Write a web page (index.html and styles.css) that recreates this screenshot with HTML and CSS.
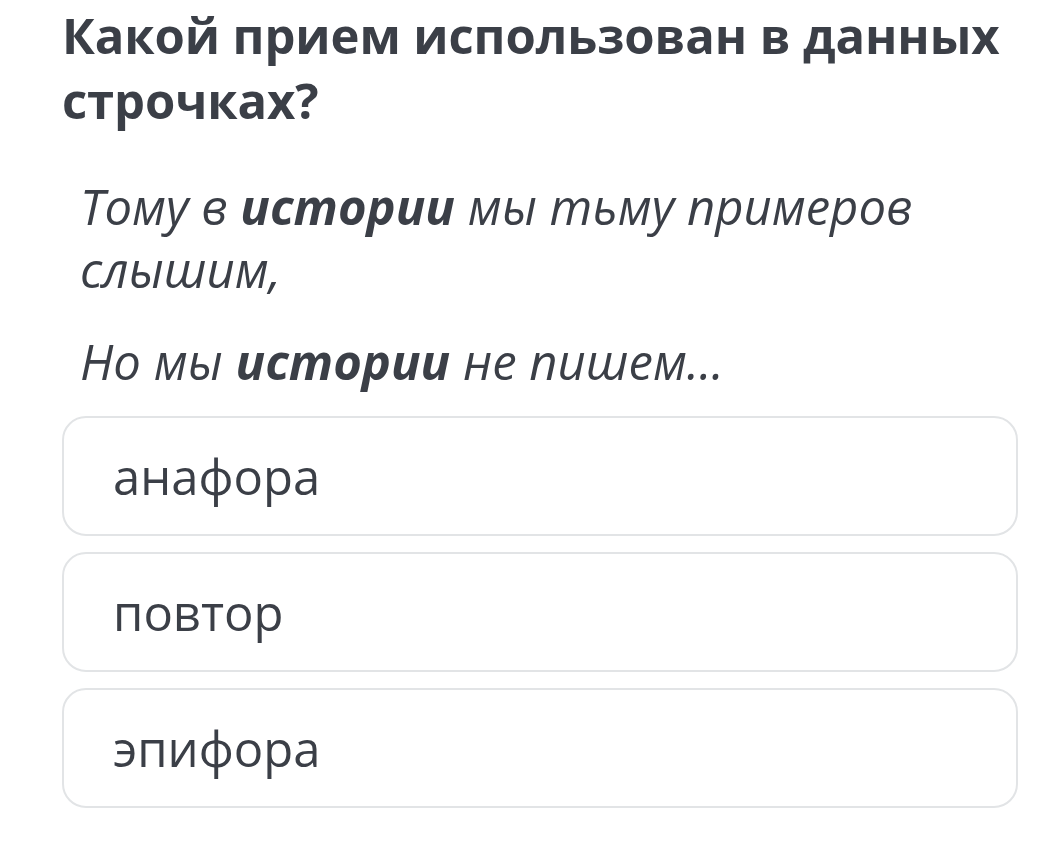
FILE: index.html
```html
<!DOCTYPE html>
<html lang="ru">
<head>
<meta charset="utf-8">
<link rel="stylesheet" href="styles.css">
</head>
<body>
<main class="quiz">
  <h1 class="question">Какой прием использован в данных строчках?</h1>
  <div class="quote">
    <p>Тому в <b>истории</b> мы тьму примеров слышим,</p>
    <p>Но мы <b>истории</b> не пишем...</p>
  </div>
  <div class="options">
    <div class="option">анафора</div>
    <div class="option">повтор</div>
    <div class="option">эпифора</div>
  </div>
</main>
</body>
</html>
```
FILE: styles.css
```css
html, body {
  margin: 0;
  padding: 0;
  background: #ffffff;
}
body {
  font-family: "Open Sans", "Liberation Sans", sans-serif;
  color: #3b3f47;
}
.quiz {
  width: 956px;
  padding: 0 34px 0 62px;
}
.question {
  margin: 0;
  padding-top: 3px;
  font-size: 49px;
  font-weight: 700;
  line-height: 65px;
  letter-spacing: -0.1px;
}
.quote {
  padding: 0 14px 0 18px;
  margin-top: 42px;
  font-style: italic;
  font-size: 49px;
  line-height: 63px;
}
.quote p {
  margin: 0 0 29px;
}
.quote p:last-child {
  margin-bottom: 0;
}
.quote b {
  font-weight: 700;
}
.options {
  display: flex;
  flex-direction: column;
  gap: 16px;
  margin-top: 23px;
}
.option {
  height: 116px;
  border: 2px solid #e2e4e6;
  border-radius: 24px;
  padding: 0 49px;
  display: flex;
  align-items: center;
  font-size: 49px;
}
```
